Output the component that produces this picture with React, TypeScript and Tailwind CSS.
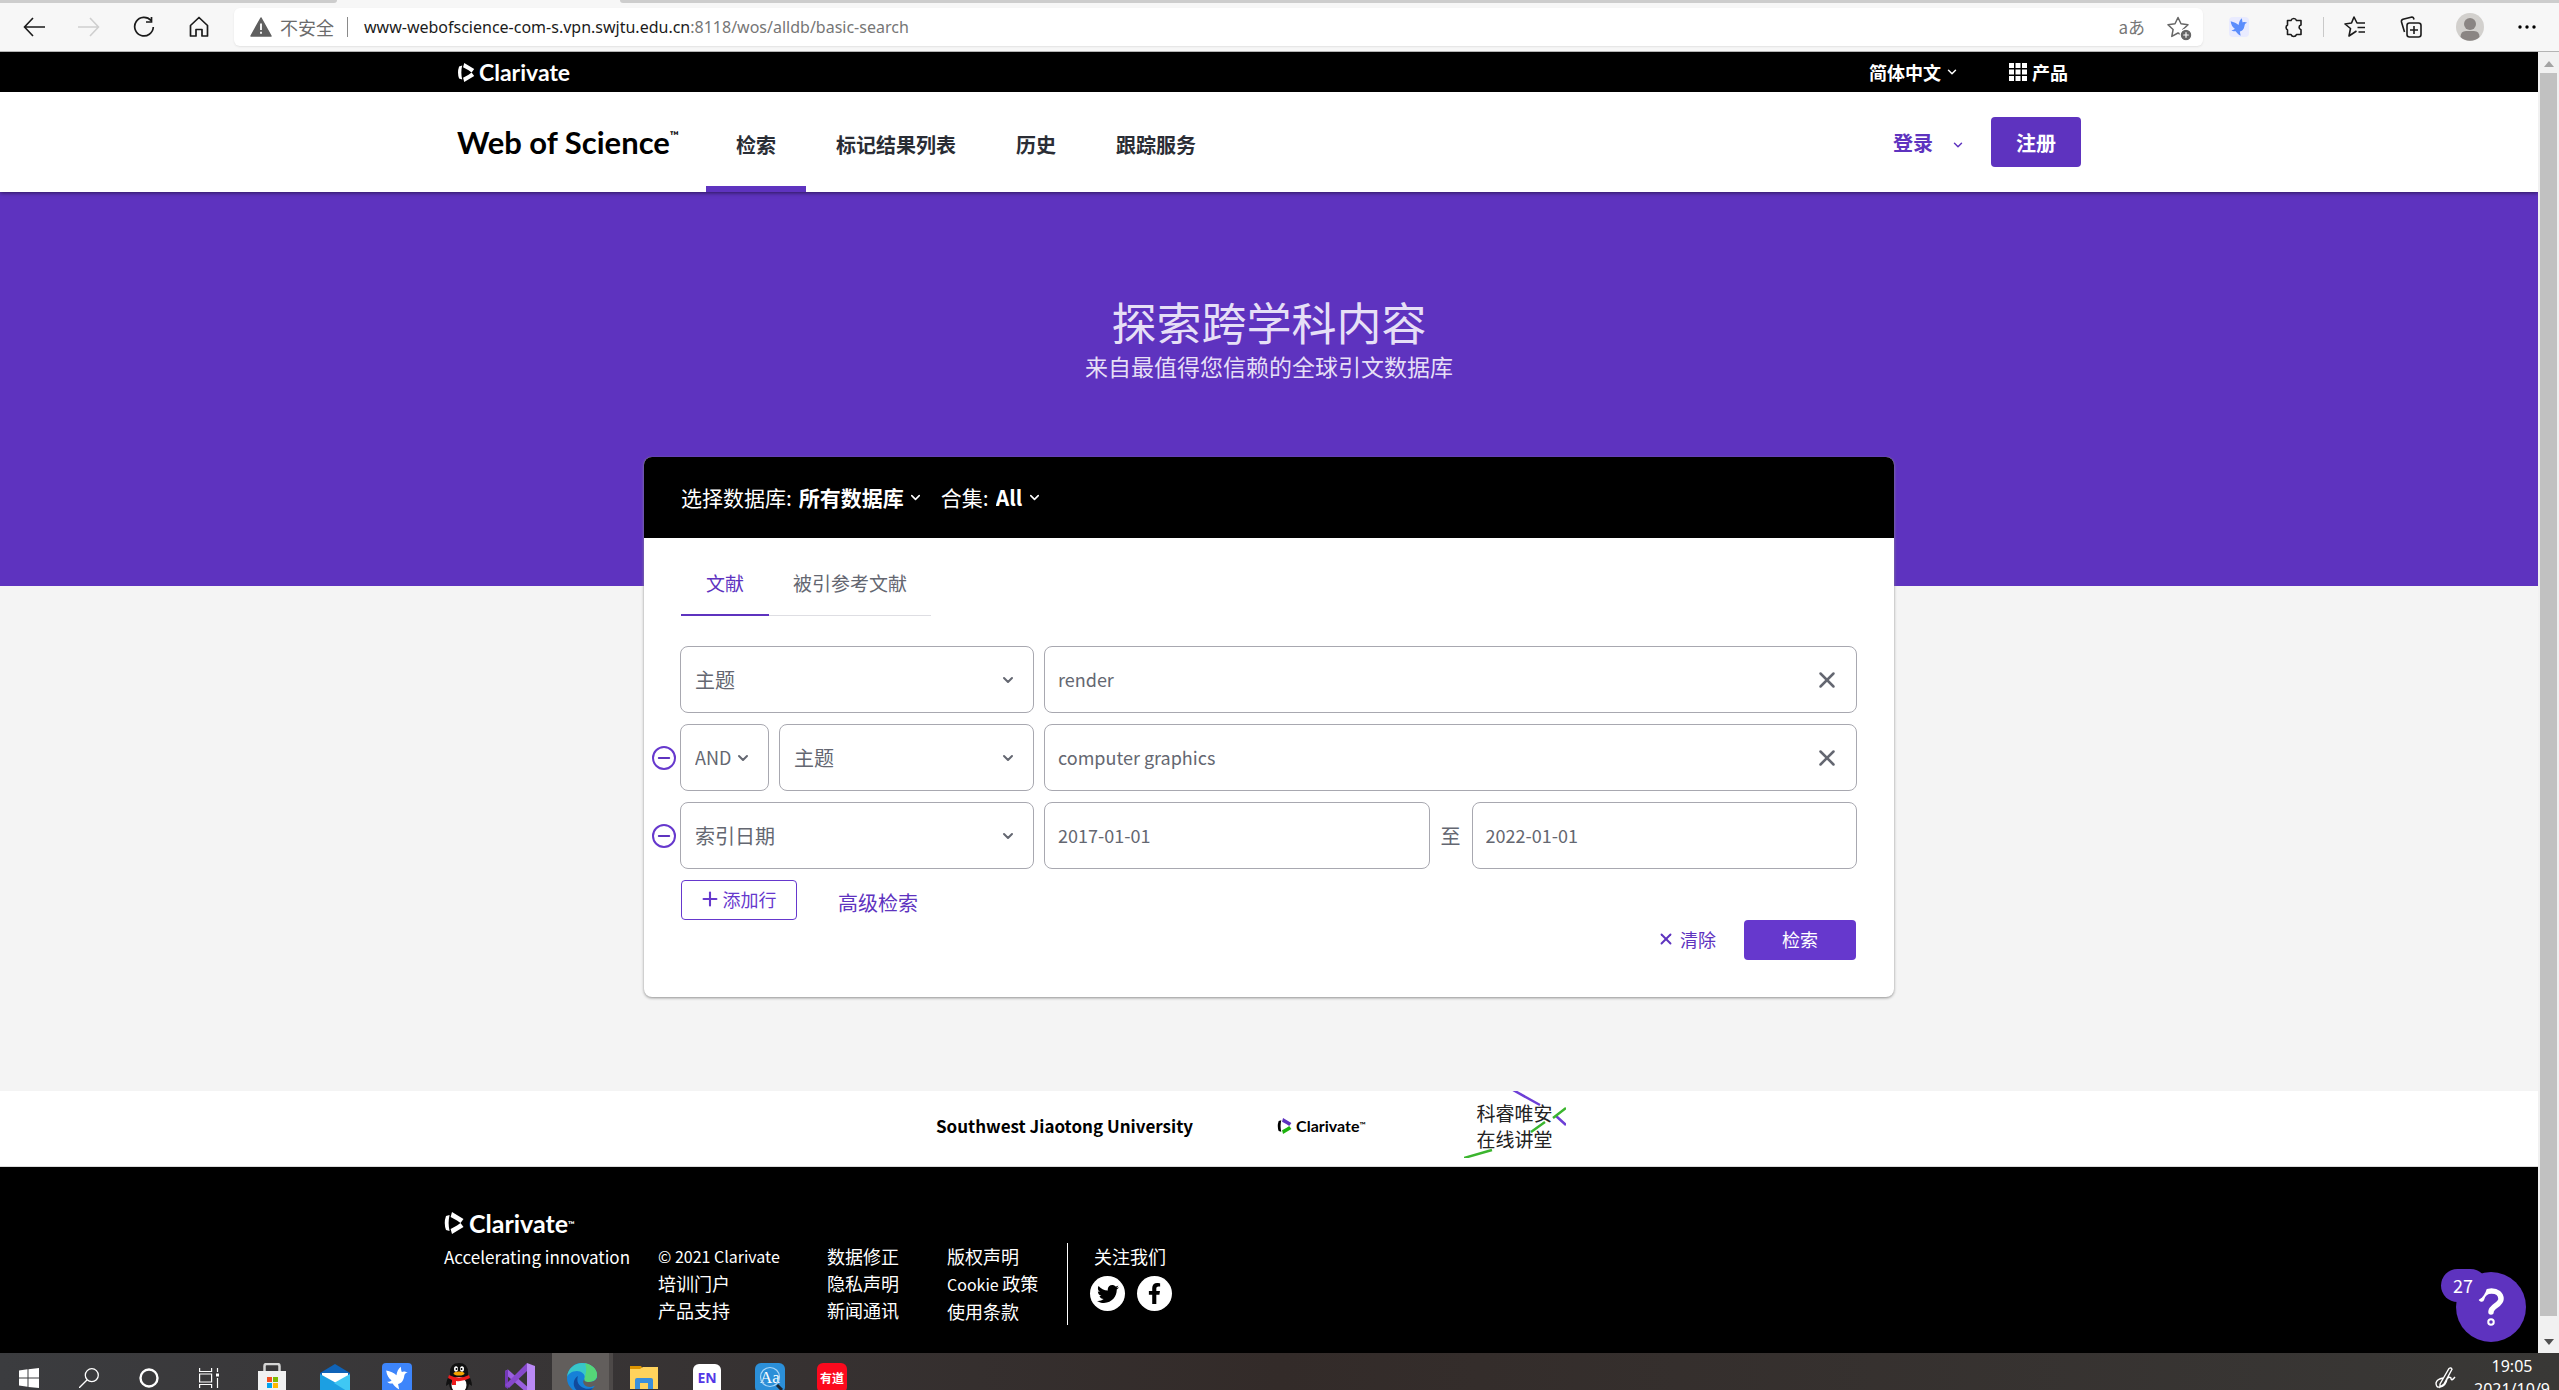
import type { ReactNode } from "react";
import { ChevronDown, CirclePlus, Minus, Plus, X } from "lucide-react";
import { FaFacebookF, FaTwitter } from "react-icons/fa";

type FieldSelectProps = { label: string; value: string; className?: string; small?: boolean };

const NAV_ITEMS = ["检索", "标记结果列表", "历史", "跟踪服务"];

function ClarivateMark({ className, colored = false }: { className: string; colored?: boolean }) {
  return (
    <svg viewBox="0 0 20 22" className={className} aria-hidden="true">
      <path d="M2 4 5.6 3Q3.6 11 5.6 19L2 18Q-.5 11 2 4Z" fill={colored ? "#000" : "currentColor"} />
      <path d="M8 0 19.5 7 16.5 11 13 8.500 6.600 5Z" fill={colored ? "#5e33bf" : "currentColor"} />
      <path d="M8 22 19.5 15 16.5 11 13 13.500 6.600 17Z" fill={colored ? "#1db30e" : "currentColor"} />
    </svg>
  );
}

function StarIcon({ className }: { className: string }) {
  return (
    <svg viewBox="0 0 22 22" className={className} fill="none" stroke="currentColor" strokeWidth="1.5" strokeLinejoin="round">
      <path d="m11 1.500 3 6.300 7 .9-5.100 4.800 1.300 6.900L11 17l-6.200 3.400 1.300-6.900L1 8.700l7-.9Z" />
    </svg>
  );
}

function BirdIcon({ className }: { className: string }) {
  return (
    <svg viewBox="0 0 24 24" className={className} fill="currentColor" aria-hidden="true">
      <path d="M2 5c4 1 7 2 9.500 4.500C12 6 13 3.500 15.500 1.500c.3 2 .3 3.500 1 5 1.500-.8 2.500-.8 5.500.5-2.500.5-3 1.500-3.500 4-.7 4-3 6-5.500 6.500l1 5c-3-1.500-5-4-6-5.500-2.500.5-4-.3-5-1.500 2 0 3.200-.4 4-1.500C4.500 12.500 2.500 9.500 2 5Z" />
    </svg>
  );
}

function BrowserBar() {
  return (
    <header className="border-b border-[#b4b4b4] bg-[#f7f7f7]">
      <div className="flex h-[3px]">
        <div className="w-[337px] rounded-br bg-[#cdcdcd]" />
        <div className="w-[283px]" />
        <div className="flex-1 rounded-bl bg-[#cdcdcd]" />
      </div>
      <div className="flex h-12 items-center pl-[23px] text-[#1b1b1b]">
        <div className="flex gap-[33px]">
          <button aria-label="后退">
            <svg viewBox="0 0 22 22" className="size-[22px]" fill="none" stroke="currentColor" strokeWidth="1.6">
              <path d="M10 2 1.5 11l8.500 9M2 11h20" />
            </svg>
          </button>
          <button aria-label="前进" className="text-[#cfcfcf]">
            <svg viewBox="0 0 22 22" className="size-[22px]" fill="none" stroke="currentColor" strokeWidth="1.6">
              <path d="M12 2l8.500 9-8.500 9M20 11H0" />
            </svg>
          </button>
          <button aria-label="刷新">
            <svg viewBox="0 0 22 22" className="size-[22px]" fill="none" stroke="currentColor" strokeWidth="1.7">
              <path d="M18 4.500A9.300 9.300 0 1 0 20.300 11M18.500 1v5h-5.500" />
            </svg>
          </button>
          <button aria-label="主页">
            <svg viewBox="0 0 22 22" className="size-[22px]" fill="none" stroke="currentColor" strokeWidth="1.7" strokeLinejoin="round">
              <path d="M2.500 9.500 11 1.500l8.500 8V20H14v-6.500H8V20H2.500Z" />
            </svg>
          </button>
        </div>
        <div className="ml-6 flex h-[38px] flex-1 items-center rounded-md bg-white pl-4 pr-[14px] text-[18px] shadow-[0_1px_2px_#e2e2e2]">
          <svg viewBox="0 0 22 20" className="mr-2 h-5 w-[22px]" aria-hidden="true">
            <path d="M11 1 21 19H1Z" fill="#5f5f5f" stroke="#5f5f5f" strokeWidth="1.5" strokeLinejoin="round" />
            <path d="M11 6.500v6.500M11 14.800v2" stroke="#fff" strokeWidth="1.8" />
          </svg>
          <span className="text-[#6b6b6b]">不安全</span>
          <div className="ml-[13px] mr-4 h-5 w-px bg-[#8a8a8a]" />
          <label htmlFor="address" className="flex font-['Noto_Sans'] text-[16px]">
            www-webofscience-com-s.vpn.swjtu.edu.cn<span className="text-[#767676]">:8118/wos/alldb/basic-search</span>
          </label>
          <input id="address" className="min-w-0 flex-1 outline-none" />
          <button aria-label="翻译" className="mr-[22px] text-[17px] text-[#777]">aあ</button>
          <button aria-label="收藏" className="relative">
            <StarIcon className="size-[22px] text-[#666]" />
            <CirclePlus className="absolute -bottom-1 -right-1 size-[14px] fill-[#666] text-white" />
          </button>
        </div>
        <div className="flex w-[356px] items-center pl-[26px]">
          <BirdIcon className="size-5 rounded-sm bg-[#e9ebff] text-[#5b8dfc]" />
          <svg viewBox="0 0 22 22" className="ml-[34px] size-[22px]" fill="none" stroke="currentColor" strokeWidth="1.6" strokeLinejoin="round">
            <path d="M4.500 4.500H8a2.900 2.900 0 0 1 5.500 0H18V9a2.400 2.400 0 0 0 0 4.700v4.800h-4.500a2.900 2.900 0 0 1-5.500 0H4.500V14a2.900 2.900 0 0 1 0-5Z" />
          </svg>
          <div className="ml-[18px] h-5 w-px bg-[#c9c9c9]" />
          <svg viewBox="0 0 24 22" className="ml-5 h-[22px] w-6" fill="none" stroke="currentColor" strokeWidth="1.6" strokeLinejoin="round">
            <path d="M12.500 15 5 20l1.500-7.500L1 8l6.500-1L10 1l3 6h8M13.500 11.500H21M14.500 16H21" />
          </svg>
          <svg viewBox="0 0 22 22" className="ml-8 size-[22px]" fill="none" stroke="currentColor" strokeWidth="1.6" strokeLinejoin="round">
            <rect x="7" y="7" width="14" height="14" rx="2.500" />
            <path d="M14 10v8M10 14h8M4.500 16 1.500 6q-.5-2 1.500-2.700l9-2.300q1.500 0 2 2.500" />
          </svg>
          <svg viewBox="0 0 28 28" className="ml-[34px] size-7" aria-hidden="true">
            <circle cx="14" cy="14" r="14" fill="#d2d0cd" />
            <circle cx="14" cy="11" r="6" fill="#8a8583" />
            <path d="M4.500 24q0-6 5.500-6h8q5.500 0 5.500 6a14 14 0 0 1-19 0Z" fill="#8a8583" />
          </svg>
          <svg viewBox="0 0 18 4" className="ml-[34px] h-1 w-[18px]" aria-hidden="true">
            <circle cx="2" cy="2" r="1.700" />
            <circle cx="9" cy="2" r="1.700" />
            <circle cx="16" cy="2" r="1.700" />
          </svg>
        </div>
      </div>
    </header>
  );
}

function TopBar() {
  return (
    <div className="bg-black text-white">
      <div className="mx-auto flex h-10 max-w-[1624px] items-center">
        <a href="#" className="flex items-center gap-1 font-['Lato'] text-[23px] font-bold">
          <ClarivateMark className="h-[19px] w-[18px]" />
          Clarivate
        </a>
        <button className="ml-auto flex items-center gap-1 text-[18px] font-bold">
          简体中文
          <ChevronDown className="size-[14px]" strokeWidth={2.500} />
        </button>
        <button className="ml-[50px] mr-[13px] flex items-center gap-[5px] text-[18px] font-bold">
          <svg viewBox="0 0 18 18" className="size-[18px]" fill="currentColor" aria-hidden="true">
            {[0, 6.500, 13].map((y) => [0, 6.500, 13].map((x) => <rect key={`${x}-${y}`} x={x} y={y} width="5" height="5" />))}
          </svg>
          产品
        </button>
      </div>
    </div>
  );
}

function SiteHeader() {
  return (
    <div className="relative z-10 bg-white shadow-[0_1px_4px_#0008]">
      <div className="mx-auto flex h-[100px] max-w-[1624px] items-stretch">
        <a href="#" className="flex items-center font-['Lato'] text-[31px] font-bold text-black">
          Web of Science<sup className="text-[12px]">™</sup>
        </a>
        <nav className="ml-[27px] flex text-[20px] font-bold text-[#2a2d35]">
          {NAV_ITEMS.map((item, i) => (
            <a
              key={item}
              href="#"
              className={`flex items-center border-b-[6px] px-[30px] pt-3 ${i === 0 ? "border-[#5e33bf]" : "border-transparent"}`}
            >
              {item}
            </a>
          ))}
        </nav>
        <div className="ml-auto flex items-center gap-[26px] text-[20px] font-bold">
          <button className="flex items-center gap-[18px] pt-[2px] text-[#5e33bf]">
            登录
            <ChevronDown className="mt-1 size-[14px]" strokeWidth={2.500} />
          </button>
          <button className="h-[50px] w-[90px] rounded-[4px] bg-[#5e33bf] pt-[2px] text-white">注册</button>
        </div>
      </div>
    </div>
  );
}

function FieldSelect({ label, value, className = "", small = false }: FieldSelectProps) {
  return (
    <div className={`relative ${className}`}>
      <select
        aria-label={label}
        className={`size-full appearance-none rounded-lg border border-[#a8a8b0] bg-white pl-[14px] text-[#646771] outline-none ${small ? "text-[18px]" : "text-[20px]"}`}
      >
        <option>{value}</option>
      </select>
      <ChevronDown
        className="pointer-events-none absolute right-[18px] top-1/2 size-4 -translate-y-1/2 text-[#646771]"
        strokeWidth={3}
      />
    </div>
  );
}

function FieldInput({ id, label, value, clearable = false }: { id: string; label: string; value: string; clearable?: boolean }) {
  return (
    <div className="flex min-w-0 flex-1 items-center rounded-lg border border-[#a8a8b0] bg-white pl-[13px] pr-4">
      <input
        id={id}
        aria-label={label}
        defaultValue={value}
        className="min-w-0 flex-1 bg-transparent text-[18px] text-[#646771] outline-none"
      />
      {clearable && (
        <button aria-label="清空" className="text-[#646771]">
          <X className="size-[26px]" strokeWidth={2.300} />
        </button>
      )}
    </div>
  );
}

function SearchRow({ removable = false, children }: { removable?: boolean; children: ReactNode }) {
  return (
    <div className="flex h-[67px]">
      <div className="flex w-9 items-center pl-2">
        {removable && (
          <button aria-label="删除行" className="flex size-6 items-center justify-center rounded-full border-2 border-[#6638cd] text-[#5e33bf]">
            <Minus className="size-[18px]" strokeWidth={2.500} />
          </button>
        )}
      </div>
      <div className="flex min-w-0 flex-1 gap-[10px]">{children}</div>
    </div>
  );
}

function DatabasePicker({ id, label, value }: { id: string; label: string; value: string }) {
  return (
    <div className="flex items-center">
      <label htmlFor={id} className="mr-[7px]">{label}</label>
      <select id={id} className="appearance-none bg-black font-bold outline-none">
        <option>{value}</option>
      </select>
      <ChevronDown className="ml-1 size-[15px]" strokeWidth={2.500} />
    </div>
  );
}

function SearchCard() {
  return (
    <section className="mx-auto max-w-[1250px] overflow-hidden rounded-lg bg-white shadow-[0_1px_3px_#8f8f8f]">
      <div className="flex h-[81px] items-center gap-[18px] bg-black px-[37px] text-[21px] text-white">
        <DatabasePicker id="database" label="选择数据库:" value="所有数据库" />
        <DatabasePicker id="edition" label="合集:" value="All" />
      </div>
      <div className="flex pl-[37px] text-[19px]">
        <button className="h-[78px] border-b-2 border-[#5e33bf] px-[25px] pt-[14px] text-[#5e33bf]">文献</button>
        <button className="h-[78px] border-b border-[#dedee3] px-6 pt-[14px] text-[#646771]">被引参考文献</button>
      </div>
      <form className="pb-[37px] pr-[37px] pt-[30px]" onSubmit={(e) => e.preventDefault()}>
        <div className="flex flex-col gap-[11px]">
          <SearchRow>
            <FieldSelect label="检索字段" value="主题" className="w-[354px]" />
            <FieldInput id="term-1" label="检索词" value="render" clearable />
          </SearchRow>
          <SearchRow removable>
            <div className="flex w-[354px] gap-[10px]">
              <FieldSelect label="运算符" value="AND" className="w-[89px]" small />
              <FieldSelect label="检索字段" value="主题" className="flex-1" />
            </div>
            <FieldInput id="term-2" label="检索词" value="computer graphics" clearable />
          </SearchRow>
          <SearchRow removable>
            <FieldSelect label="检索字段" value="索引日期" className="w-[354px]" />
            <FieldInput id="date-from" label="开始日期" value="2017-01-01" />
            <label htmlFor="date-to" className="self-center px-[1px] text-[20px] text-[#646771]">至</label>
            <FieldInput id="date-to" label="结束日期" value="2022-01-01" />
          </SearchRow>
        </div>
        <div className="mt-[11px] flex items-center gap-[41px] pl-[37px]">
          <button className="flex h-10 w-[116px] items-center justify-center gap-[2px] rounded-[4px] border border-[#6638cd] pb-[2px] pr-[3px] text-[18px] text-[#6638cd]">
            <Plus className="size-[22px]" strokeWidth={2.300} />
            添加行
          </button>
          <a href="#" className="pt-[6px] text-[20px] text-[#5e33bf]">高级检索</a>
        </div>
        <div className="flex items-center justify-end gap-7 pr-px text-[18px]">
          <button type="reset" className="flex items-center gap-[5px] pb-[2px] text-[#5e33bf]">
            <X className="size-[18px]" strokeWidth={2.500} />
            清除
          </button>
          <button type="submit" className="h-10 w-28 rounded-[4px] bg-[#6638cd] pb-[2px] text-white">检索</button>
        </div>
      </form>
    </section>
  );
}

function PartnerStrip() {
  return (
    <div className="flex h-[76px] items-stretch border-b border-[#dcdcdc] bg-white pl-[936px] text-black">
      <div className="flex items-center pb-[6px]">
        <strong className="text-[17px]">Southwest Jiaotong University</strong>
        <span className="ml-[84px] flex items-center gap-1 font-['Lato'] text-[16px] font-bold">
          <ClarivateMark className="h-4 w-[15px]" colored />
          <span>Clarivate<sup className="text-[8px]">™</sup></span>
        </span>
      </div>
      <a href="#" className="relative ml-[98px] w-[102px] pl-[13px] pt-[9px] text-[19px] leading-[26px] text-[#222]">
        <svg viewBox="0 0 102 67" className="absolute left-0 top-0 h-[67px] w-[102px]" fill="none" strokeWidth="2.500" aria-hidden="true">
          <path d="M49-1 76 14M92 25 102 34" stroke="#6d3fd6" />
          <path d="M102 17 89 27M81 31 67 41M0 67 28 59" stroke="#3bb52e" />
        </svg>
        科睿唯安
        <br />
        在线讲堂
      </a>
    </div>
  );
}

function SiteFooter() {
  return (
    <footer className="bg-black text-white">
      <div className="mx-auto h-[186px] max-w-[1650px] pt-[44px] text-[18px] leading-[27px]">
        <a href="#" className="flex h-6 items-center gap-[5px] font-['Lato'] text-[25px] font-bold">
          <ClarivateMark className="h-[22px] w-5" />
          <span>Clarivate<sup className="text-[9px]">™</sup></span>
        </a>
        <div className="mt-[8px] flex">
          <p className="w-[214px] whitespace-nowrap text-[17px]">Accelerating innovation</p>
          <ul className="w-[169px]">
            <li className="text-[16px]">© 2021 Clarivate</li>
            <li><a href="#">培训门户</a></li>
            <li><a href="#">产品支持</a></li>
          </ul>
          <ul className="w-[120px]">
            <li><a href="#">数据修正</a></li>
            <li><a href="#">隐私声明</a></li>
            <li><a href="#">新闻通讯</a></li>
          </ul>
          <ul className="w-[120px]">
            <li><a href="#">版权声明</a></li>
            <li><a href="#"><span className="text-[16px]">Cookie </span>政策</a></li>
            <li><a href="#">使用条款</a></li>
          </ul>
          <div className="border-l border-white pl-[22px]">
            <p className="pl-1">关注我们</p>
            <div className="mt-[6px] flex gap-3 text-black">
              <a href="#" aria-label="Twitter" className="flex size-[35px] items-center justify-center rounded-full bg-white">
                <FaTwitter className="size-[22px]" />
              </a>
              <a href="#" aria-label="Facebook" className="flex size-[35px] items-center justify-center rounded-full bg-white">
                <FaFacebookF className="size-[21px]" />
              </a>
            </div>
          </div>
        </div>
      </div>
    </footer>
  );
}

function ScrollBar() {
  return (
    <div className="flex w-[21px] flex-col items-center bg-[#f1f1f1]">
      <svg viewBox="0 0 10 6" className="mt-[9px] h-[6px] w-[10px] shrink-0" fill="#a3a3a3">
        <path d="M0 6 5 0l5 6Z" />
      </svg>
      <div className="mt-[6px] w-[17px] flex-1 bg-[#c1c1c1]" />
      <svg viewBox="0 0 10 6" className="mb-2 mt-[23px] h-[6px] w-[10px] shrink-0" fill="#505050">
        <path d="M0 0h10L5 6Z" />
      </svg>
    </div>
  );
}

function Taskbar() {
  return (
    <div className="flex h-[37px] shrink-0 items-start overflow-hidden bg-linear-to-r from-[#3b3c3f] via-[#332b29] to-[#393836] pl-[19px] text-white">
      <svg viewBox="0 0 20 20" className="mt-[15px] size-5 shrink-0" fill="#fff">
        <path d="M0 2.500 8.500 1.300v8.200H0ZM9.500 1.200 20 0v9.500H9.500ZM0 10.500h8.500v8.300L0 17.600ZM9.500 10.500H20V20L9.500 18.900Z" />
      </svg>
      <svg viewBox="0 0 20 20" className="ml-10 mt-[15px] size-5 shrink-0" fill="none" stroke="#fff" strokeWidth="1.300">
        <circle cx="12.800" cy="7.200" r="6.500" />
        <path d="M8.200 11.800 0 20" />
      </svg>
      <svg viewBox="0 0 20 20" className="ml-10 mt-[15px] size-5 shrink-0" fill="none" stroke="#fff" strokeWidth="2.400">
        <circle cx="10" cy="10" r="8.500" />
      </svg>
      <svg viewBox="0 0 20 20" className="ml-10 mt-[15px] size-5 shrink-0" fill="none" stroke="#fff" strokeWidth="1.200">
        <path d="M.6 0v3.500h12V0M.6 20v-3.500h12V20M.6 6h12v8H.6ZM18.500 0v4M18.500 10v10" />
        <path d="M17 5.500h3v3h-3Z" fill="#fff" stroke="none" />
      </svg>
      <svg viewBox="0 0 30 30" className="ml-[38px] mt-[10px] size-[30px] shrink-0">
        <path d="M7.500 9V3q0-2 2-2h11q2 0 2 2v6" fill="none" stroke="#d5d5d5" strokeWidth="2.500" />
        <path d="M1 8h28v22H1Z" fill="#f1f1f1" />
        <path d="M10 14h5v5h-5Z" fill="#f25022" />
        <path d="M16 14h5v5h-5Z" fill="#7fba00" />
        <path d="M10 20h5v5h-5Z" fill="#00a4ef" />
        <path d="M16 20h5v5h-5Z" fill="#ffb900" />
      </svg>
      <svg viewBox="0 0 30 30" className="ml-[33px] mt-[10px] size-[30px] shrink-0">
        <path d="M0 10 15 1l15 9v20H0Z" fill="#0f63b8" />
        <path d="M2 10h26v12H2Z" fill="#fff" />
        <path d="M0 11 18 21 30 30H0Z" fill="#1c9fe2" />
        <path d="M30 11 14 20 30 30Z" fill="#3fc8f4" />
      </svg>
      <BirdIcon className="ml-8 mt-[10px] size-[30px] shrink-0 rounded bg-[#3d85fb] p-[2px]" />
      <svg viewBox="0 0 26 30" className="ml-[34px] mt-[10px] h-[30px] w-[26px] shrink-0">
        <path d="M4 12Q3 0 13 0t9 12q4 5 4 11l-3-2q-1 9-10 9T3 21l-3 2q0-6 4-11Z" fill="#111" />
        <ellipse cx="13" cy="22" rx="7.500" ry="8" fill="#fff" />
        <ellipse cx="10" cy="6" rx="2" ry="2.800" fill="#fff" />
        <ellipse cx="16" cy="6" rx="2" ry="2.800" fill="#fff" />
        <circle cx="10.500" cy="6" r="1" />
        <circle cx="15.500" cy="6" r="1" />
        <ellipse cx="13" cy="10.500" rx="5.500" ry="2" fill="#f5a300" />
        <path d="M3 12q10 5 20 0l1 3q-7 4-14 3v4H6v-5l-4-2Z" fill="#ee1c1c" />
      </svg>
      <svg viewBox="0 0 30 30" className="ml-[33px] mt-[10px] size-[30px] shrink-0">
        <path d="M0 8 3 6.500 26 27l-4 3L0 11Z" fill="#9a5fe0" />
        <path d="M0 24V8l3-1.500V26Z" fill="#7438b8" />
        <path d="M0 22 22 0v8L4 25Z" fill="#8648cc" />
        <path d="M22 0 30 3v24l-8 3Z" fill="#b989f5" />
      </svg>
      <div className="ml-[17px] h-full w-[61px] shrink-0 border-r-4 border-[#4d4948] bg-[#625e5c] pl-[15px] pt-[10px]">
        <svg viewBox="0 0 30 30" className="size-[30px]">
          <circle cx="15" cy="15" r="15" fill="#1681d8" />
          <path d="M0 14C1 5 8 0 15 0c9 0 15 6 15 12 0 5-4 7-8 7-4 0-5-1-4.500-3C19 11 14 8 10 8 5 8 1 11 0 14Z" fill="#38c7c8" />
          <path d="M18 .3C26 2 30 7 30 12c0 5-4 7-8 7-4 0-5-1-4.500-3 1-5 3-9 .5-15.700Z" fill="#55d678" />
          <path d="M11 13c-3 8 5 15 15 12-6 8-17 5-19-2-1-5 1-8 4-10Z" fill="#114a9c" />
          <path d="M17.500 16c-.5 2 .5 3 4.500 3 3 0 6-1 8-4v7l-6 2c-6 1-10-5-6.500-8Z" fill="#625e5c" />
        </svg>
      </div>
      <svg viewBox="0 0 28 28" className="ml-[17px] mt-3 size-7 shrink-0">
        <path d="M0 1h11l2 3H0Z" fill="#dc9400" />
        <path d="M0 4h10l3-2h15v22H0Z" fill="#ffd35c" />
        <path d="M5 24v-9q0-2 2-2h14q2 0 2 2v9h-5v-6h-8v6Z" fill="#3a8fdb" />
      </svg>
      <div className="ml-[35px] mt-[11px] flex h-[30px] w-7 shrink-0 items-center justify-center rounded-t-md bg-white pb-1 font-['Open_Sans'] text-[14px] font-bold text-[#5438e6]">
        EN
      </div>
      <div className="relative ml-[34px] mt-[10px] flex size-[30px] shrink-0 items-center justify-center rounded-md bg-[#2b8fd8] font-['Liberation_Serif'] text-[17px]">
        Aa
        <svg viewBox="0 0 30 30" className="absolute inset-0 size-[30px]" fill="none" aria-hidden="true">
          <circle cx="15" cy="14" r="9.500" stroke="#a9d6f6" strokeWidth="1.200" />
          <path d="m22 22 5 5" stroke="#1c2530" strokeWidth="3" />
        </svg>
      </div>
      <div className="ml-8 mt-[10px] flex size-[30px] shrink-0 items-center justify-center rounded-md bg-[#fb0a1e] text-[12px] font-bold">
        有道
      </div>
      <svg viewBox="0 0 22 22" className="ml-auto mt-[14px] size-[22px] shrink-0" fill="none" stroke="#fff" strokeWidth="1.400">
        <path d="M5 17 14 1.500q2-1.500 3 .8L9 17l-4 3ZM8 11q-6 1-7 5 0 5 4 4 6-1 7-8 2-3 4-1 0 4 4-1" />
      </svg>
      <div className="ml-2 w-[94px] shrink-0 pt-[2px] text-center font-['Noto_Sans'] text-[16px] leading-[23px]">
        <p>19:05</p>
        <p>2021/10/9</p>
      </div>
    </div>
  );
}

function HelpBadge() {
  return (
    <div className="absolute bottom-[11px] right-3 h-[73px] w-[85px] text-white">
      <button aria-label="帮助" className="absolute bottom-0 right-0 flex size-[70px] items-center justify-center rounded-full bg-[#5e33bf]">
        <svg viewBox="0 0 26 38" className="h-[38px] w-[26px]" fill="none" stroke="#fff" strokeWidth="5.500" strokeLinecap="round">
          <path d="M3.500 11C5 5 9 3 13.500 3 19 3 23 6 23 11c0 6-10 7-10 13" />
          <circle cx="13" cy="34" r="1" />
        </svg>
      </button>
      <span className="absolute left-0 top-0 h-[33px] w-[46px] rounded-full bg-[#5e33bf] pl-3 text-[18px] leading-[33px]">27</span>
    </div>
  );
}

export default function App() {
  return (
    <div className="flex h-screen flex-col overflow-hidden bg-[#f4f4f4] font-['Noto_Sans_CJK_SC',sans-serif]">
      <BrowserBar />
      <div className="flex min-h-0 flex-1">
        <div className="relative flex min-w-0 flex-1 flex-col overflow-hidden">
          <TopBar />
          <SiteHeader />
          <main className="flex-1 bg-[linear-gradient(#5e33bf_394px,#f4f4f4_394px)]">
            <div className="flex h-[265px] flex-col items-center pt-[102px] text-[#e6dff6]">
              <h1 className="text-[45px] leading-[56px]">探索跨学科内容</h1>
              <p className="text-[23px] leading-8">来自最值得您信赖的全球引文数据库</p>
            </div>
            <SearchCard />
          </main>
          <PartnerStrip />
          <SiteFooter />
          <HelpBadge />
        </div>
        <ScrollBar />
      </div>
      <Taskbar />
    </div>
  );
}
